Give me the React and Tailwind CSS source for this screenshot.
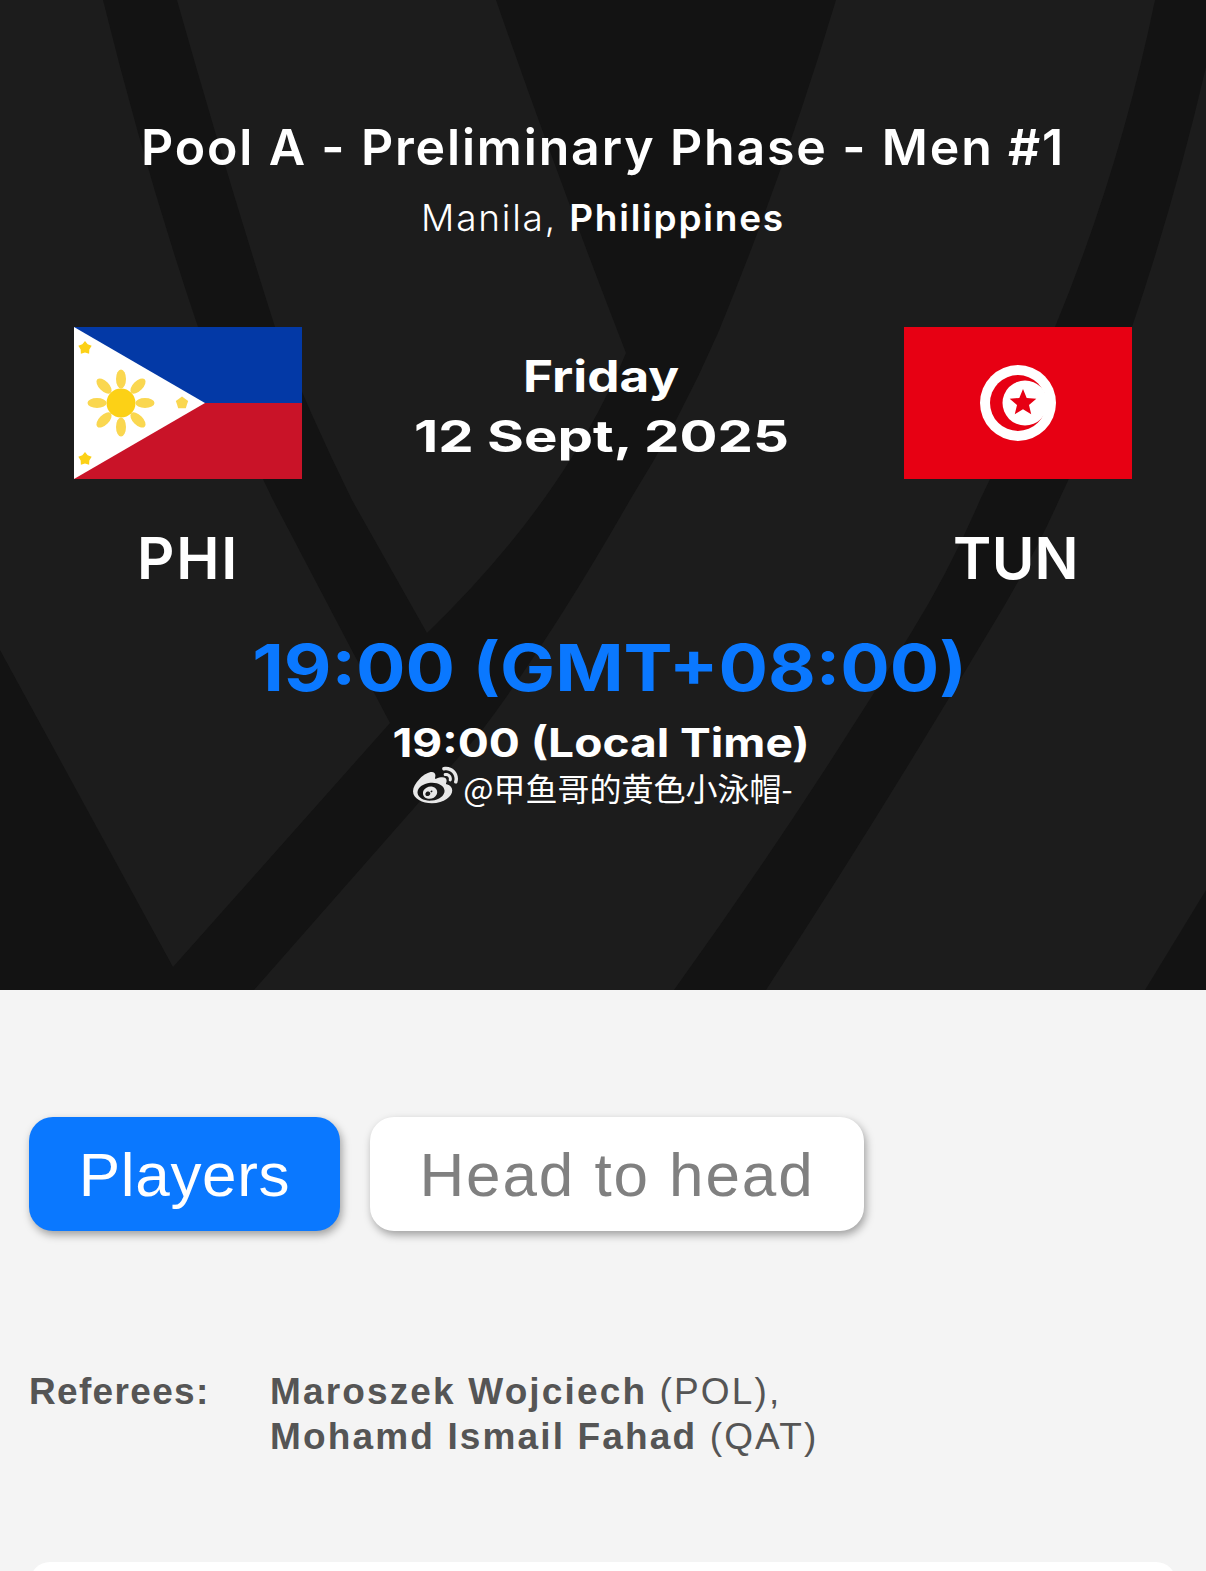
import { FaWeibo } from "react-icons/fa";

const INTER = "font-['Inter',sans-serif]";

function HeroBands() {
  return (
    <svg className="absolute inset-0" width="1206" height="990" viewBox="0 0 1206 990" fill="#131313">
      <path d="M103 0Q145 170 198 327Q232 415 273 500L390 723L173 967L0 650L0 990L254 990L480 733Q550 640 630 500Q680 420 718 333Q785 170 836 0L496 0Q555 170 626 353Q565 500 427 633L352 500Q310 415 275 327Q225 170 177 0Z" />
      <path d="M1155 0L1206 0L1206 67Q1175 200 1132 327Q1100 415 1059 500Q1030 565 988 633Q880 815 766 990L674 990Q800 815 911 633Q950 570 980 500Q1022 415 1055 327Q1120 170 1155 0Z" />
      <path d="M1206 890L1145 990L1206 990Z" />
    </svg>
  );
}

function Star({ cx, cy, r, fill, inner = 0.45 }) {
  const pts = [];
  for (let i = 0; i < 10; i++) {
    const rad = i % 2 === 0 ? r : r * inner;
    const a = -Math.PI / 2 + (i * Math.PI) / 5;
    pts.push(`${cx + rad * Math.cos(a)},${cy + rad * Math.sin(a)}`);
  }
  return <polygon points={pts.join(" ")} fill={fill} />;
}

function FlagPhi() {
  const rays = [0, 45, 90, 135, 180, 225, 270, 315];
  return (
    <svg width="228" height="152" viewBox="0 0 228 152">
      <rect width="228" height="76" fill="#0339a6" />
      <rect y="76" width="228" height="76" fill="#c91328" />
      <polygon points="0,0 131,76 0,152" fill="#fff" />
      {rays.map((deg) => (
        <ellipse key={deg} cx="47" cy="52" rx="5" ry="9.5" fill="#fad750" transform={`rotate(${deg} 47 76)`} />
      ))}
      <circle cx="47" cy="76" r="14.5" fill="#fcd116" />
      <Star cx={11} cy={21} r={7} fill="#fcd116" inner={0.65} />
      <Star cx={11} cy={132} r={7} fill="#fcd116" inner={0.65} />
      <Star cx={108} cy={76} r={6.5} fill="#fad750" inner={0.8} />
    </svg>
  );
}

function FlagTun() {
  return (
    <svg width="228" height="152" viewBox="0 0 228 152">
      <rect width="228" height="152" fill="#e70013" />
      <circle cx="114" cy="76" r="38" fill="#fff" />
      <circle cx="114" cy="76" r="28" fill="#e70013" />
      <circle cx="121" cy="76" r="22.5" fill="#fff" />
      <Star cx={119} cy={76} r={14} fill="#e70013" />
    </svg>
  );
}

function Team({ code, tracking, children }) {
  return (
    <div className="flex w-[228px] flex-col items-center">
      {children}
      <div className={`${INTER} ${tracking} mt-[44px] text-[58px] leading-[70px] font-semibold text-white`}>{code}</div>
    </div>
  );
}

export default function App() {
  return (
    <div className="h-[1571px] w-[1206px] overflow-hidden bg-[#f4f4f4]">
      <section className="relative h-[990px] bg-[#1c1c1c]">
        <HeroBands />
        <div className="relative flex flex-col items-center pt-[117px]">
          <h1 className={`${INTER} text-[50px] leading-[60px] font-semibold tracking-[0.037em] text-white`}>
            Pool A - Preliminary Phase - Men #1
          </h1>
          <p className={`${INTER} mt-[19px] text-[37px] leading-[44px] font-light tracking-[0.048em] text-white`}>
            Manila, <span className="font-semibold">Philippines</span>
          </p>

          <div className="mt-[87px] flex w-full items-start justify-between px-[74px]">
            <Team code="PHI" tracking="tracking-[0.03em]"><FlagPhi /></Team>
            <div className={`${INTER} -ml-[3px] flex flex-col items-center pt-[19px] text-[44px] leading-[60px] font-bold text-white`}>
              <span className="scale-x-[1.165]">Friday</span>
              <span className="scale-x-[1.28]">12 Sept, 2025</span>
            </div>
            <Team code="TUN" tracking="-translate-x-[2px] tracking-[0.005em]"><FlagTun /></Team>
          </div>

          <div className={`${INTER} mt-[35px] ml-[14px] scale-x-[1.147] text-[64px] leading-[80px] font-bold text-[#0a78ff]`}>
            19:00 (GMT+08:00)
          </div>
          <div className={`${INTER} mt-[11px] mr-[3px] scale-x-[1.152] text-[40px] leading-[48px] font-bold text-white`}>
            19:00 (Local Time)
          </div>
          <div className="-mt-[3px] flex items-center gap-[5px] text-white">
            <FaWeibo className="text-[45px] text-[#e8e8e8]" />
            <span className="font-['Noto_Sans_CJK_SC',sans-serif] text-[32px] leading-[44px] font-normal">@甲鱼哥的黄色小泳帽-</span>
          </div>
        </div>
      </section>

      <div className="flex gap-[30px] pt-[127px] pl-[29px] font-['Liberation_Sans',sans-serif]">
        <button className="flex h-[114px] w-[311px] items-center justify-center rounded-[24px] bg-[#0a78ff] text-[62px] tracking-[0.7px] text-white shadow-[2px_4px_8px_rgba(0,0,0,0.35)]">
          Players
        </button>
        <button className="flex h-[114px] w-[494px] items-center justify-center rounded-[24px] bg-white text-[62px] tracking-[1.9px] text-[#808080] shadow-[2px_4px_8px_rgba(0,0,0,0.35)]">
          Head to head
        </button>
      </div>

      <div className="mt-[138px] flex pl-[29px] font-['Liberation_Sans',sans-serif] text-[37px] leading-[45px] text-[#555555]">
        <div className="w-[241px] font-bold tracking-[0.036em]">Referees:</div>
        <div className="tracking-[0.058em]">
          <div><span className="font-bold">Maroszek Wojciech</span> (POL),</div>
          <div><span className="font-bold">Mohamd Ismail Fahad</span> (QAT)</div>
        </div>
      </div>

      <div className="mx-[30px] mt-[103px] h-[40px] rounded-[20px] bg-white" />
    </div>
  );
}
